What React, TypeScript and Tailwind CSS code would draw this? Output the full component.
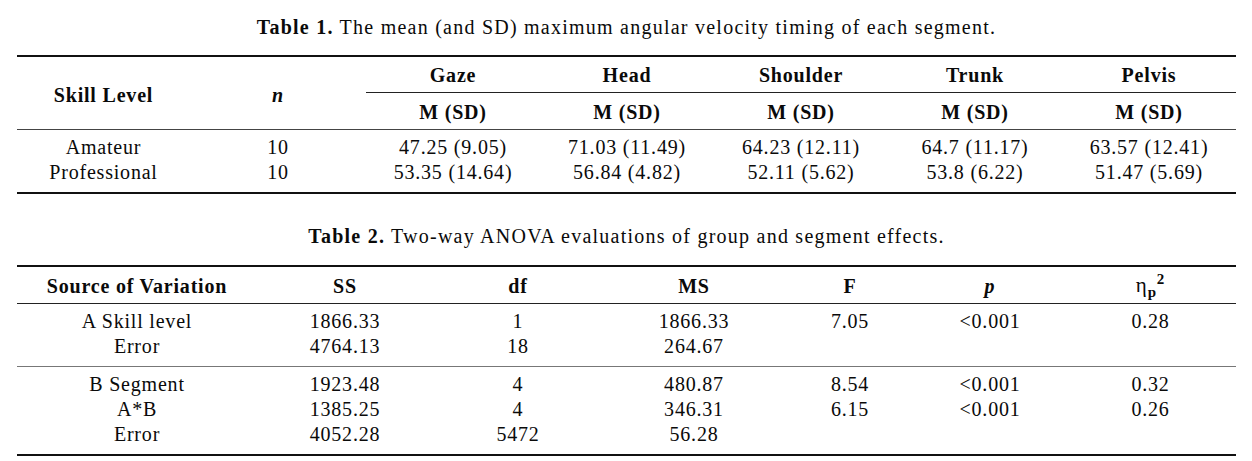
import React from "react";

const t1Cols = "grid-cols-[173px_176px_174px_174px_174px_174px_174px]";
const t2Cols = "grid-cols-[240px_176px_170px_182px_130px_150px_171px]";

const t1Rows = [
  ["Amateur", "10", "47.25 (9.05)", "71.03 (11.49)", "64.23 (12.11)", "64.7 (11.17)", "63.57 (12.41)"],
  ["Professional", "10", "53.35 (14.64)", "56.84 (4.82)", "52.11 (5.62)", "53.8 (6.22)", "51.47 (5.69)"],
];

const t2Group1 = [
  ["A Skill level", "1866.33", "1", "1866.33", "7.05", "<0.001", "0.28"],
  ["Error", "4764.13", "18", "264.67", "", "", ""],
];
const t2Group2 = [
  ["B Segment", "1923.48", "4", "480.87", "8.54", "<0.001", "0.32"],
  ["A*B", "1385.25", "4", "346.31", "6.15", "<0.001", "0.26"],
  ["Error", "4052.28", "5472", "56.28", "", "", ""],
];

function Row({ cells, cols }: { cells: string[]; cols: string }) {
  return (
    <div className={`grid ${cols} h-[25px] leading-[25px]`}>
      {cells.map((c, i) => (
        <div key={i} className="text-center whitespace-nowrap">
          {c}
        </div>
      ))}
    </div>
  );
}

export default function App() {
  return (
    <div
      className="w-[1252px] h-[461px] bg-white text-[#0a0a0a] text-[20px] tracking-[0.04em] overflow-hidden"
      style={{ fontFamily: '"Liberation Serif", "Times New Roman", serif' }}
    >
      <div className="ml-[17px] w-[1219px]">
        {/* Table 1 */}
        <div className="pt-[15px] mb-[15px] h-[25px] leading-[25px] text-center whitespace-nowrap box-content tracking-[0.062em]">
          <span className="font-bold">Table 1.</span> The mean (and SD) maximum angular velocity timing of each segment.
        </div>
        <div className="h-[2px] bg-[#111]" />
        <div className={`grid ${t1Cols} grid-rows-[35px_1px_36px]`}>
          <div className="row-span-3 flex items-center justify-center pt-[3px] font-bold">Skill Level</div>
          <div className="row-span-3 flex items-center justify-center pt-[3px] font-bold italic">n</div>
          {["Gaze", "Head", "Shoulder", "Trunk", "Pelvis"].map((h) => (
            <div key={h} className="flex items-center justify-center font-bold pt-[1px]">
              {h}
            </div>
          ))}
          <div className="col-span-5 bg-[#222]" />
          {[0, 1, 2, 3, 4].map((i) => (
            <div key={i} className="flex items-center justify-center font-bold pt-[1px]">
              M (SD)
            </div>
          ))}
        </div>
        <div className="h-px bg-[#444]" />
        <div className="pt-[5px] pb-[7px]">
          {t1Rows.map((r, i) => (
            <Row key={i} cells={r} cols={t1Cols} />
          ))}
        </div>
        <div className="h-[2px] bg-[#111]" />

        {/* Table 2 */}
        <div className="mt-[30px] mb-[16px] h-[25px] leading-[25px] text-center whitespace-nowrap tracking-[0.062em]">
          <span className="font-bold">Table 2.</span> Two-way ANOVA evaluations of group and segment effects.
        </div>
        <div className="h-[2px] bg-[#111]" />
        <div className={`grid ${t2Cols} h-[36px] items-center font-bold`}>
          <div className="text-center pt-[1px]">Source of Variation</div>
          <div className="text-center pt-[1px]">SS</div>
          <div className="text-center pt-[1px]">df</div>
          <div className="text-center pt-[1px]">MS</div>
          <div className="text-center pt-[1px]">F</div>
          <div className="text-center pt-[1px] italic">p</div>
          <div className="text-center pt-[1px]">
            <span className="font-normal text-[21px]">η</span>
            <span className="text-[15px] relative top-[5px]">p</span>
            <span className="text-[15px] relative -top-[8px]">2</span>
          </div>
        </div>
        <div className="h-px bg-[#222]" />
        <div className="pt-[5px] pb-[7px]">
          {t2Group1.map((r, i) => (
            <Row key={i} cells={r} cols={t2Cols} />
          ))}
        </div>
        <div className="h-px bg-[#777]" />
        <div className="pt-[5px] pb-[7px]">
          {t2Group2.map((r, i) => (
            <Row key={i} cells={r} cols={t2Cols} />
          ))}
        </div>
        <div className="h-[2px] bg-[#111]" />
      </div>
    </div>
  );
}
